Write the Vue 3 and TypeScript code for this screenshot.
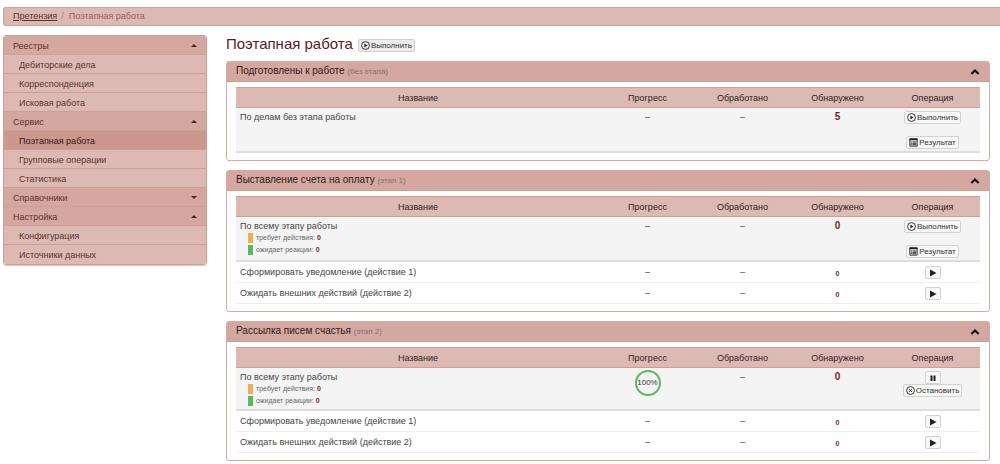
<script setup lang="ts">
import { ref } from 'vue'

interface MenuGroup {
  title: string
  open: boolean
  items: string[]
}

interface StageAction {
  icon: 'run' | 'result' | 'stop' | 'play' | 'pause'
  label?: string
}

interface Stage {
  title: string
  note: string
  rowClass: string
  name: string
  breakdown: boolean
  progress?: number
  found: number
  buttons: StageAction[]
  steps: string[]
}

const groups = ref<MenuGroup[]>([
  { title: 'Реестры', open: true, items: ['Дебиторские дела', 'Корреспонденция', 'Исковая работа'] },
  { title: 'Сервис', open: true, items: ['Поэтапная работа', 'Групповые операции', 'Статистика'] },
  { title: 'Справочники', open: false, items: [] },
  { title: 'Настройка', open: true, items: ['Конфигурация', 'Источники данных'] },
])

const current = 'Поэтапная работа'

const runAndResult: StageAction[] = [
  { icon: 'run', label: 'Выполнить' },
  { icon: 'result', label: 'Результат' },
]
const steps = ['Сформировать уведомление (действие 1)', 'Ожидать внешних действий (действие 2)']

const stages: Stage[] = [
  {
    title: 'Подготовлены к работе', note: '(без этапа)', rowClass: 'spread',
    name: 'По делам без этапа работы', breakdown: false, found: 5, buttons: runAndResult, steps: [],
  },
  {
    title: 'Выставление счета на оплату', note: '(этап 1)', rowClass: 'spread',
    name: 'По всему этапу работы', breakdown: true, found: 0, buttons: runAndResult, steps,
  },
  {
    title: 'Рассылка писем счастья', note: '(этап 2)', rowClass: 'tight',
    name: 'По всему этапу работы', breakdown: true, progress: 100, found: 0,
    buttons: [{ icon: 'pause' }, { icon: 'stop', label: 'Остановить' }], steps,
  },
]
</script>

<template>
  <div class="page">
    <nav class="breadcrumb" aria-label="Навигация">
      <a href="#">Претензия</a><span class="slash">/</span><span class="here">Поэтапная работа</span>
    </nav>
    <div class="body">
      <aside class="menu">
        <template v-for="g in groups" :key="g.title">
          <button type="button" class="group" :aria-expanded="g.open" @click="g.open = !g.open">
            {{ g.title }}<span class="caret" :class="{ up: g.open }"></span>
          </button>
          <template v-if="g.open">
            <a v-for="i in g.items" :key="i" href="#" class="item" :class="{ active: i === current }">{{ i }}</a>
          </template>
        </template>
      </aside>

      <main>
        <div class="title">
          <h1>Поэтапная работа</h1>
          <button type="button" class="btn">
            <svg class="ico" viewBox="0 0 16 16"><circle cx="8" cy="8" r="7" /><path class="fill" d="M6 4.500 11.500 8 6 11.500Z" /></svg>Выполнить
          </button>
        </div>

        <section v-for="s in stages" :key="s.title" class="panel">
          <header>
            <h2>{{ s.title }} <small>{{ s.note }}</small></h2>
            <button type="button" class="fold" aria-label="Свернуть">
              <svg viewBox="0 0 16 12"><path d="M2.200 9.300 8 3.700l5.800 5.600" /></svg>
            </button>
          </header>
          <div class="content">
            <table>
              <colgroup><col /><col class="num" /><col class="num" /><col class="num" /><col class="num" /></colgroup>
              <thead>
                <tr><th>Название</th><th>Прогресс</th><th>Обработано</th><th>Обнаружено</th><th>Операция</th></tr>
              </thead>
              <tbody>
                <tr class="summary" :class="s.rowClass">
                  <td>
                    {{ s.name }}
                    <ul v-if="s.breakdown">
                      <li class="need">требует действия: <b>0</b></li>
                      <li class="wait">ожидает реакции: <b>0</b></li>
                    </ul>
                  </td>
                  <td>
                    <div v-if="s.progress" class="ring">
                      <svg viewBox="0 0 26 26"><circle cx="13" cy="13" r="12" /></svg>
                      <span>{{ s.progress }}%</span>
                    </div>
                    <template v-else>–</template>
                  </td>
                  <td>–</td>
                  <td class="found"><b>{{ s.found }}</b></td>
                  <td class="op">
                    <div class="ops">
                      <button v-for="b in s.buttons" :key="b.icon" type="button" class="btn" :class="{ square: !b.label }" :aria-label="b.label ?? 'Пауза'">
                        <svg v-if="b.icon === 'run'" class="ico" viewBox="0 0 16 16"><circle cx="8" cy="8" r="7" /><path class="fill" d="M6 4.500 11.500 8 6 11.500Z" /></svg>
                        <svg v-else-if="b.icon === 'stop'" class="ico" viewBox="0 0 16 16"><circle cx="8" cy="8" r="7" /><path d="m5.200 5.200 5.600 5.600m0-5.600-5.600 5.600" /></svg>
                        <svg v-else-if="b.icon === 'result'" class="ico" viewBox="0 0 16 16"><path d="M1.500 1.500h13v13h-13z" /><path class="fill" d="M1 1h14v3H1zM3 6h2v1.500H3zM6 6h7v1.500H6zM3 8.600h2v1.500H3zM6 8.600h7v1.500H6zM3 11.200h2v1.500H3zM6 11.200h7v1.500H6z" /></svg>
                        <svg v-else class="ico" viewBox="0 0 16 16"><path class="fill" d="M3 3h4v11H3zM9 3h4v11H9z" /></svg>{{ b.label }}
                      </button>
                    </div>
                  </td>
                </tr>
                <tr v-for="t in s.steps" :key="t" class="step">
                  <td>{{ t }}</td>
                  <td>–</td>
                  <td>–</td>
                  <td class="small"><b>0</b></td>
                  <td class="op">
                    <div class="ops">
                      <button type="button" class="btn square" aria-label="Запустить">
                        <svg class="ico" viewBox="0 0 16 16"><path class="fill" d="M2 1v14l13-7z" /></svg>
                      </button>
                    </div>
                  </td>
                </tr>
              </tbody>
            </table>
          </div>
        </section>
      </main>
    </div>
  </div>
</template>

<style>
body {
  background: #fff;
  overflow-x: hidden;
}
</style>

<style scoped>
* {
  box-sizing: border-box;
}
.page {
  padding: 7px 0 4px 3px;
  font: 9px/14px "Liberation Sans", Arial, sans-serif;
  color: #444;
}
button {
  font: inherit;
  color: inherit;
  cursor: pointer;
}
.breadcrumb {
  display: flex;
  height: 19px;
  padding: 0 9px;
  line-height: 17px;
  background: #dcb9b2;
  border: 1px solid #d4a19a;
  border-right: 0;
  border-radius: 3px 0 0 3px;
}
.breadcrumb a {
  color: #5e342e;
}
.slash {
  padding: 0 5px 0 4px;
  color: #a08782;
}
.here {
  color: #a05c60;
}
.body {
  display: flex;
  align-items: flex-start;
  gap: 19px;
  padding: 9px 10px 0 0;
}
.menu {
  flex: 0 0 204px;
  border: 1px solid #cf9e94;
  border-radius: 3px;
  box-shadow: 0 1px 1px #d9c4c0;
  overflow: hidden;
}
.group,
.item {
  display: flex;
  align-items: center;
  justify-content: space-between;
  width: 100%;
  height: 19px;
  padding: 1px 9px 0;
  border: 0;
  border-bottom: 1px solid #cf9e94;
  background: #d4a8a0;
  color: #5b342f;
  text-decoration: none;
}
.item {
  padding-left: 15px;
  background: #dcb9b2;
}
.item:last-child {
  border-bottom: 0;
}
.item.active {
  background: #cc988e;
  color: #321613;
}
.caret {
  border: 3px solid transparent;
  border-top-color: #47231f;
  border-bottom: 0;
}
.caret.up {
  border-top: 0;
  border-bottom: 3px solid #47231f;
}
main {
  flex: 1;
  min-width: 0;
}
.title {
  display: flex;
  align-items: center;
  gap: 5px;
  height: 17px;
  margin-bottom: 9px;
}
h1 {
  margin: 0;
  font-size: 15px;
  line-height: 17px;
  font-weight: 400;
  color: #5e1a22;
}
.btn {
  display: inline-flex;
  align-items: center;
  gap: 1px;
  height: 13px;
  padding: 0 2px;
  border: 1px solid #d2d2d2;
  border-radius: 2px;
  background: #f8f8f8;
  color: #333;
  font-size: 8px;
  line-height: 11px;
  white-space: nowrap;
}
.title .btn {
  background: #ececec;
  margin-top: 3px;
}
.btn.square {
  width: 16px;
  justify-content: center;
}
.ico {
  flex: none;
  width: 9px;
  height: 9px;
  fill: none;
  stroke: #222;
  stroke-width: 1.6;
}
.square .ico {
  width: 8px;
  height: 8px;
}
.ico .fill {
  fill: #222;
  stroke: none;
}
.panel {
  margin-bottom: 9px;
  border: 1px solid #d9aaa2;
  border-radius: 3px;
}
.panel:last-child {
  margin-bottom: 0;
}
.panel header {
  display: flex;
  align-items: center;
  justify-content: space-between;
  height: 20px;
  padding: 0 9px;
  background: #d4a8a0;
  border-bottom: 1px solid #cf9e94;
}
h2 {
  margin: 0;
  font-size: 10px;
  line-height: 18px;
  font-weight: 400;
  color: #2f1a18;
}
h2 small {
  font-size: 8px;
  color: #88706c;
}
.fold {
  display: flex;
  padding: 0;
  border: 0;
  background: none;
}
.fold svg {
  width: 10px;
  height: 8px;
  fill: none;
  stroke: #111;
  stroke-width: 3.5;
}
.content {
  padding: 5px 9px 7px;
}
table {
  width: 100%;
  table-layout: fixed;
  border-collapse: separate;
  border-spacing: 0;
}
.num {
  width: 95px;
}
th {
  height: 21px;
  padding: 0;
  font-weight: 400;
  color: #2f2422;
  background: #dcb9b2;
  border-top: 1px solid #cf9e94;
  border-bottom: 1px solid #cf9e94;
}
td {
  padding: 3px 0 0;
  vertical-align: top;
  text-align: center;
}
td:first-child {
  padding-left: 4px;
  text-align: left;
}
.summary td {
  height: 45px;
  padding-top: 2px;
  background: #f4f4f4;
  border-bottom: 2px solid #ddd;
}
.summary.tight td {
  height: 43px;
}
.summary .op {
  padding-top: 3px;
}
.summary .found {
  font-size: 10px;
}
.step td {
  height: 21px;
  border-bottom: 1px solid #eee;
}
.step .small {
  padding-top: 5px;
  font-size: 7px;
}
.step .op {
  padding-top: 4px;
}
b {
  color: #7e2229;
}
ul {
  margin: 0;
  padding: 0 0 0 8px;
  list-style: none;
  font-size: 7px;
  line-height: 10px;
  color: #666;
}
li {
  border-left: 5px solid #f0ad4e;
  padding-left: 3px;
  margin-bottom: 2px;
}
li.wait {
  border-color: #5cb85c;
  margin-bottom: 0;
}
.ops {
  display: flex;
  flex-direction: column;
  align-items: center;
}
.spread .ops {
  gap: 12px;
}
.ring {
  display: grid;
  place-items: center;
  width: 26px;
  height: 26px;
  margin: 0 auto;
  color: #333;
}
.ring svg,
.ring span {
  grid-area: 1 / 1;
}
.ring svg {
  width: 26px;
  height: 26px;
  fill: none;
  stroke: #5cb85c;
  stroke-width: 2;
}
.ring span {
  font-size: 8px;
}
</style>
